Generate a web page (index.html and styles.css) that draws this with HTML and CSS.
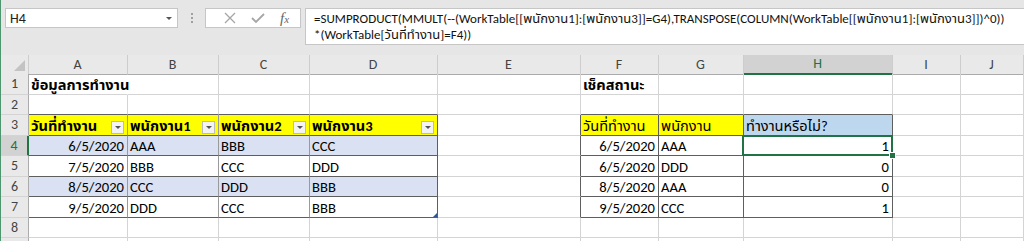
FILE: index.html
```html
<!DOCTYPE html>
<html lang="th">
<head>
<meta charset="utf-8">
<title>Excel</title>
<link rel="stylesheet" href="styles.css">
</head>
<body>
<div class="app">
  <div class="bar">
    <div class="namebox"><span>H4</span><span class="caret"></span></div>
    <div class="dots"><i></i><i></i><i></i></div>
    <div class="fxbox">
      <svg class="ico" width="14" height="14" viewBox="0 0 14 14"><path d="M2 2 L12 12 M12 2 L2 12" stroke="#a6a6a6" stroke-width="1.3" fill="none"/></svg>
      <svg class="ico" width="16" height="14" viewBox="0 0 16 14"><path d="M2 7 L6 11 L14 3" stroke="#a6a6a6" stroke-width="1.8" fill="none"/></svg>
      <span class="fx">f<small>x</small></span>
    </div>
    <div class="formula">=SUMPRODUCT(MMULT(--(WorkTable[[พนักงาน1]:[พนักงาน3]]=G4),TRANSPOSE(COLUMN(WorkTable[[พนักงาน1]:[พนักงาน3]])^0))<br>*(WorkTable[วันที่ทำงาน]=F4))</div>
  </div>
  <div class="sheet">
    <div class="row hdr">
      <div class="c corner"></div>
      <div class="c ch">A</div><div class="c ch">B</div><div class="c ch">C</div><div class="c ch">D</div><div class="c ch">E</div><div class="c ch">F</div><div class="c ch">G</div><div class="c ch sel-h">H</div><div class="c ch">I</div><div class="c ch">J</div>
    </div>
    <div class="row r21">
      <div class="c rh">1</div>
      <div class="c b nor">ข้อมูลการทำงาน</div><div class="c"></div><div class="c"></div><div class="c"></div><div class="c"></div>
      <div class="c b">เช็คสถานะ</div><div class="c"></div><div class="c"></div><div class="c"></div><div class="c"></div>
    </div>
    <div class="row r20">
      <div class="c rh">2</div>
      <div class="c tb"></div><div class="c tb"></div><div class="c tb"></div><div class="c tb"></div><div class="c"></div>
      <div class="c tb"></div><div class="c tb"></div><div class="c tb"></div><div class="c"></div><div class="c"></div>
    </div>
    <div class="row r21">
      <div class="c rh">3</div>
      <div class="c yel b tb ti"><span>วันที่ทำงาน</span><span class="flt"></span></div>
      <div class="c yel b tb ti"><span>พนักงาน1</span><span class="flt"></span></div>
      <div class="c yel b tb ti"><span>พนักงาน2</span><span class="flt"></span></div>
      <div class="c yel b tb tr"><span>พนักงาน3</span><span class="flt"></span></div>
      <div class="c tr"></div>
      <div class="c yel tb tr">วันที่ทำงาน</div>
      <div class="c yel tb tr">พนักงาน</div>
      <div class="c blu tb tr">ทำงานหรือไม่?</div>
      <div class="c"></div><div class="c"></div>
    </div>
    <div class="row r20">
      <div class="c rh sel-r">4</div>
      <div class="c band tb ti num">6/5/2020</div><div class="c band tb ti">AAA</div><div class="c band tb ti">BBB</div><div class="c band tb tr">CCC</div>
      <div class="c tr"></div>
      <div class="c tb tr num">6/5/2020</div><div class="c tb tr">AAA</div><div class="c tb tr num sel">1<span class="handle"></span></div>
      <div class="c"></div><div class="c"></div>
    </div>
    <div class="row r21">
      <div class="c rh">5</div>
      <div class="c tb ti num">7/5/2020</div><div class="c tb ti">BBB</div><div class="c tb ti">CCC</div><div class="c tb tr">DDD</div>
      <div class="c tr"></div>
      <div class="c tb tr num">6/5/2020</div><div class="c tb tr">DDD</div><div class="c tb tr num">0</div>
      <div class="c"></div><div class="c"></div>
    </div>
    <div class="row r20">
      <div class="c rh">6</div>
      <div class="c band tb ti num">8/5/2020</div><div class="c band tb ti">CCC</div><div class="c band tb ti">DDD</div><div class="c band tb tr">BBB</div>
      <div class="c tr"></div>
      <div class="c tb tr num">8/5/2020</div><div class="c tb tr">AAA</div><div class="c tb tr num">0</div>
      <div class="c"></div><div class="c"></div>
    </div>
    <div class="row r21">
      <div class="c rh">7</div>
      <div class="c tb ti num">9/5/2020</div><div class="c tb ti">DDD</div><div class="c tb ti">CCC</div><div class="c tb tr resize">BBB</div>
      <div class="c tr"></div>
      <div class="c tb tr num">9/5/2020</div><div class="c tb tr">CCC</div><div class="c tb tr num">1</div>
      <div class="c"></div><div class="c"></div>
    </div>
    <div class="row r20">
      <div class="c rh">8</div>
      <div class="c"></div><div class="c"></div><div class="c"></div><div class="c"></div><div class="c"></div><div class="c"></div><div class="c"></div><div class="c"></div><div class="c"></div><div class="c"></div>
    </div>
    <div class="row r20">
      <div class="c rh"></div>
      <div class="c"></div><div class="c"></div><div class="c"></div><div class="c"></div><div class="c"></div><div class="c"></div><div class="c"></div><div class="c"></div><div class="c"></div><div class="c"></div>
    </div>
  </div>
</div>
</body>
</html>
```

FILE: styles.css
```css
html, body {
  margin: 0;
  padding: 0;
  background: #ffffff;
}
.app {
  width: 1024px;
  height: 241px;
  overflow: hidden;
  box-sizing: border-box;
  border-left: 1px solid #4e9670;
  font-family: Carlito, Lato, "Noto Sans Thai", Loma, Garuda, "Noto Sans", sans-serif;
  color: #000;
}
.bar {
  height: 55px;
  box-sizing: border-box;
  background: #e6e6e6;
  display: flex;
  align-items: flex-start;
  padding: 8px 0 0 4px;
}
.namebox {
  flex: 0 0 173px;
  height: 20px;
  box-sizing: border-box;
  background: #fff;
  border: 1px solid #c6c6c6;
  display: flex;
  align-items: center;
  justify-content: space-between;
  padding: 0 5px 0 4px;
  font-size: 14px;
  color: #222;
}
.caret {
  width: 0;
  height: 0;
  border-left: 3px solid transparent;
  border-right: 3px solid transparent;
  border-top: 3px solid #555;
}
.dots {
  flex: 0 0 27px;
  height: 20px;
  display: flex;
  flex-direction: column;
  align-items: center;
  justify-content: center;
  gap: 2px;
}
.dots i {
  width: 2px;
  height: 2px;
  background: #a0a0a0;
}
.fxbox {
  flex: 0 0 96px;
  height: 20px;
  box-sizing: border-box;
  background: #fff;
  border: 1px solid #c6c6c6;
  display: flex;
  align-items: center;
  justify-content: space-around;
  padding: 0 4px 0 10px;
}
.fx {
  font-family: "Liberation Serif", serif;
  font-style: italic;
  font-size: 15px;
  color: #666;
}
.fx small {
  font-size: 11px;
}
.formula {
  margin-left: 4px;
  flex: 1 1 0;
  min-width: 0;
  overflow: hidden;
  height: 37px;
  box-sizing: border-box;
  background: #fff;
  border: 1px solid #c6c6c6;
  border-right: none;
  padding: 2px 0 0 8px;
  font-size: 13px;
  line-height: 16px;
  white-space: nowrap;
  color: #111;
}
.row {
  display: grid;
  grid-template-columns: 28px 99px 91px 91px 128px 143px 78px 85px 149px 68px 63px;
}
.hdr { height: 19px; }
.r21 { height: 21px; }
.r20 { height: 20px; }
.c {
  box-sizing: border-box;
  border-right: 1px solid #d4d4d4;
  border-bottom: 1px solid #d4d4d4;
  padding: 0 3px 0 2px;
  display: flex;
  align-items: flex-end;
  white-space: nowrap;
  font-size: 14.6px;
  line-height: 18px;
  position: relative;
}
.ch {
  background: #e9e9e9;
  border-right: 1px solid #cdcdcd;
  border-bottom: 1px solid #ababab;
  justify-content: center;
  align-items: center;
  color: #444;
  font-size: 14px;
}
.corner {
  background: #e9e9e9;
  border-right: 1px solid #cdcdcd;
  border-bottom: 1px solid #ababab;
}
.corner::after {
  content: "";
  position: absolute;
  right: 3px;
  bottom: 3px;
  width: 0;
  height: 0;
  border-left: 11px solid transparent;
  border-bottom: 11px solid #c3c3c3;
}
.rh {
  background: #e9e9e9;
  border-right: 1px solid #ababab;
  border-bottom: 1px solid #d4d4d4;
  justify-content: center;
  align-items: center;
  color: #444;
  font-size: 14px;
  padding: 0;
}
.sel-h {
  background: #d2d2d2;
  color: #217346;
  border-bottom: 2px solid #217346;
}
.sel-r {
  background: #d2d2d2;
  color: #217346;
  border-right: 2px solid #217346;
}
.b { font-weight: bold; }
.nor { border-right-color: transparent; overflow: visible; }
.yel { background: #ffff00; }
.blu { background: #bdd7ee; }
.band { background: #d9e1f2; }
.tb { border-bottom-color: #5e5e5e; }
.tr { border-right-color: #5e5e5e; }
.ti { border-right-color: #9a9a9a; }
.num { justify-content: flex-end; }
.c.yel.b, .c.yel.tr:not(.num) { justify-content: space-between; }
.flt {
  width: 13px;
  height: 13px;
  box-sizing: border-box;
  margin-bottom: 1px;
  background: #f3f3f3;
  border: 1px solid #bcbcbc;
  display: flex;
  align-items: center;
  justify-content: center;
}
.flt::after {
  content: "";
  width: 0;
  height: 0;
  border-left: 3px solid transparent;
  border-right: 3px solid transparent;
  border-top: 3px solid #555;
}
.sel::after {
  content: "";
  position: absolute;
  left: -2px;
  top: -1px;
  right: -1px;
  bottom: -1px;
  border: 2px solid #217346;
}
.handle {
  position: absolute;
  right: -4px;
  bottom: -4px;
  width: 5px;
  height: 5px;
  background: #217346;
  border: 1px solid #fff;
  z-index: 2;
}
.resize::after {
  content: "";
  position: absolute;
  right: 0;
  bottom: 0;
  width: 0;
  height: 0;
  border-left: 4px solid transparent;
  border-bottom: 4px solid #2f5597;
}
```
